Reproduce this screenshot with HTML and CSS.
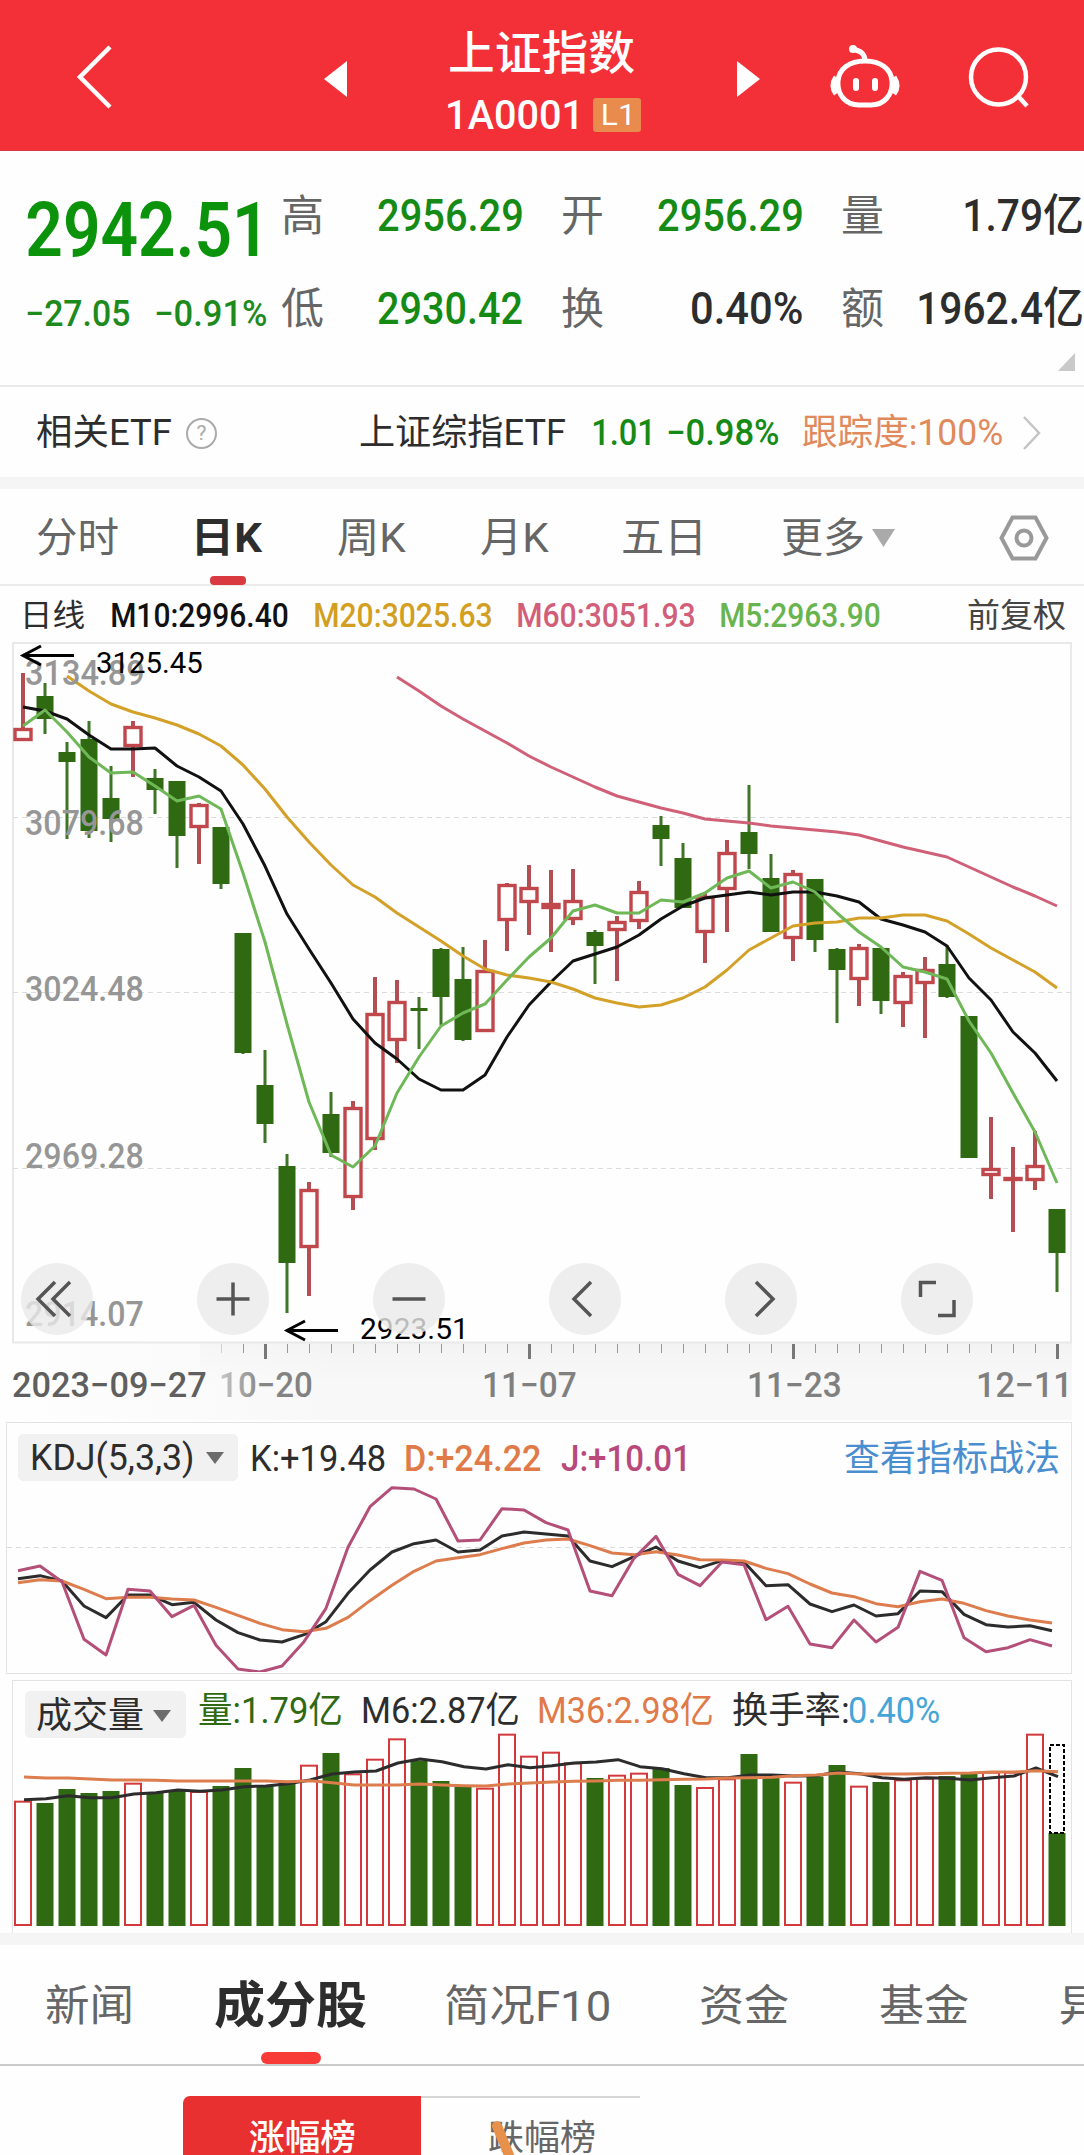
FILE: index.html
```html
<!DOCTYPE html>
<html lang="zh-CN">
<head>
<meta charset="utf-8">
<title>上证指数 1A0001</title>
<link rel="stylesheet" href="styles.css">
</head>
<body>
<header class="topbar">
  <svg class="back" width="40" height="66" viewBox="0 0 40 66"><path d="M35 3 5 33 35 63"/></svg>
  <svg class="prev" width="23" height="36" viewBox="0 0 23 36"><path d="M0 18 23 0V36Z"/></svg>
  <div class="title">
    <h1 class="fit"><span>上证指数</span></h1>
    <div class="code"><b class="fit"><span>1A0001</span></b><i class="level"><span class="fit"><span>L1</span></span></i></div>
  </div>
  <svg class="next" width="23" height="36" viewBox="0 0 23 36"><path d="M23 18 0 0V36Z"/></svg>
  <svg class="robot" width="72" height="66" viewBox="0 0 72 66"><path d="M36 17C36 9 31 7 24 5M36 17C52 17 62 25 63 37C64 51 55 61 42 61H30C17 61 8 51 9 37C10 25 20 17 36 17ZM7 33Q1 42 7 50M65 33Q71 42 65 50"/><circle class="dot" cx="24" cy="5" r="4"/><path class="eyes" d="M27 37V44M46 37V44"/></svg>
  <svg class="search" width="64" height="64" viewBox="0 0 64 64"><circle cx="31.5" cy="31" r="27.5"/><path d="M51 50 60 60"/></svg>
</header>

<section class="quote">
  <div class="last">
    <strong class="fit"><span>2942.51</span></strong>
    <div class="change"><span class="fit"><span>−27.05</span></span><span class="fit"><span>−0.91%</span></span></div>
  </div>
  <dl class="stats">
    <dt>高</dt><dd class="down w144"><span class="fit"><span>2956.29</span></span></dd>
    <dt>开</dt><dd class="down w144"><span class="fit"><span>2956.29</span></span></dd>
    <dt>量</dt><dd class="w117"><span class="fit"><span>1.79亿</span></span></dd>
    <dt>低</dt><dd class="down w144"><span class="fit"><span>2930.42</span></span></dd>
    <dt>换</dt><dd class="w110"><span class="fit"><span>0.40%</span></span></dd>
    <dt>额</dt><dd class="w163"><span class="fit"><span>1962.4亿</span></span></dd>
  </dl>
  <svg class="corner" width="17" height="18" viewBox="0 0 17 18"><path d="M17 0V18H0Z"/></svg>
</section>

<section class="etf">
  <span class="fit e1"><span>相关ETF</span></span>
  <i class="help">?</i>
  <span class="fit e2"><span>上证综指ETF</span></span>
  <span class="fit e3"><span>1.01</span></span>
  <span class="fit e4"><span>−0.98%</span></span>
  <span class="fit e5"><span>跟踪度:100%</span></span>
  <svg width="20" height="36" viewBox="0 0 20 36"><path d="M2 2 17 18 2 34"/></svg>
</section>
<div class="band"></div>

<nav class="periods">
  <span class="fit p1"><span>分时</span></span>
  <span class="fit p2"><span>日K</span></span>
  <span class="fit p3"><span>周K</span></span>
  <span class="fit p4"><span>月K</span></span>
  <span class="fit p5"><span>五日</span></span>
  <span class="fit p6"><span>更多</span></span>
  <svg class="drop" width="23" height="18" viewBox="0 0 23 18"><path d="M0 0H23L11.500 18Z"/></svg>
  <svg class="gear" width="52" height="50" viewBox="0 0 52 50"><path d="M14.500 4.500H37.500L48.500 25 37.500 45.500H14.500L3.500 25Z"/><circle cx="26" cy="25" r="7.500"/></svg>
</nav>

<div class="averages">
  <span class="fit a1"><span>日线</span></span>
  <span class="fit a2"><span>M10:2996.40</span></span>
  <span class="fit a3"><span>M20:3025.63</span></span>
  <span class="fit a4"><span>M60:3051.93</span></span>
  <span class="fit a5"><span>M5:2963.90</span></span>
  <span class="fit a6"><span>前复权</span></span>
</div>

<section class="kline">
  <svg id="kline" width="1084" height="780" viewBox="0 640 1084 780"></svg>
  <div class="tools">
    <button><svg viewBox="0 0 72 72"><path d="M34 19 17 36 34 53M49 19 32 36 49 53"/></svg></button>
    <button><svg viewBox="0 0 72 72"><path d="M36 19.500V52.500M19.500 36H52.500"/></svg></button>
    <button><svg viewBox="0 0 72 72"><path d="M19.500 36H52.500"/></svg></button>
    <button><svg viewBox="0 0 72 72"><path d="M42 19 25 36 42 53"/></svg></button>
    <button><svg viewBox="0 0 72 72"><path d="M31 19 48 36 31 53"/></svg></button>
    <button><svg viewBox="0 0 72 72"><path d="M35 19.500H19.500V34M37 52.500H53V37"/></svg></button>
  </div>
</section>

<section class="kdj">
  <div class="legend">
    <span class="pill"><span class="fit"><span>KDJ(5,3,3)</span></span><svg width="18" height="12" viewBox="0 0 18 12"><path d="M0 0H18L9 12Z"/></svg></span>
    <span class="fit k1"><span>K:+19.48</span></span>
    <span class="fit k2"><span>D:+24.22</span></span>
    <span class="fit k3"><span>J:+10.01</span></span>
    <a class="fit k4"><span>查看指标战法</span></a>
  </div>
  <svg id="kdj" width="1064" height="188" viewBox="7 1484 1064 188"></svg>
</section>

<section class="volume">
  <div class="legend">
    <span class="pill"><span class="fit"><span>成交量</span></span><svg width="18" height="12" viewBox="0 0 18 12"><path d="M0 0H18L9 12Z"/></svg></span>
    <span class="fit v1"><span>量:1.79亿</span></span>
    <span class="fit v2"><span>M6:2.87亿</span></span>
    <span class="fit v3"><span>M36:2.98亿</span></span>
    <span class="fit v4"><span>换手率:</span></span>
    <span class="fit v5"><span>0.40%</span></span>
  </div>
  <svg id="volume" width="1058" height="202" viewBox="13 1731 1058 202"></svg>
</section>
<div class="band"></div>

<nav class="sections">
  <span class="fit s1"><span>新闻</span></span>
  <span class="fit s2"><span>成分股</span></span>
  <span class="fit s3"><span>简况F10</span></span>
  <span class="fit s4"><span>资金</span></span>
  <span class="fit s5"><span>基金</span></span>
  <span class="fit s6"><span>异</span></span>
</nav>

<section class="ranks">
  <div class="rank on"><span class="fit"><span>涨幅榜</span></span></div>
  <div class="rank"><span class="fit"><span>跌幅榜</span></span><svg width="36" height="36" viewBox="0 0 36 36"><path d="M9 6 23 40"/></svg></div>
</section>
<script src="app.js"></script>
</body>
</html>
```
FILE: styles.css
```css
* { box-sizing: border-box; }
body {
  margin: 0; width: 1084px; height: 2155px; overflow: hidden; background: #fefefe;
  font-family: Roboto, "Noto Sans CJK SC", sans-serif; color: #2d2d2d;
}
svg { display: block; flex: none; fill: none; }
i { font-style: normal; }
.fit { display: block; flex: none; white-space: nowrap; font-weight: inherit; }
.fit > span { display: inline-block; transform-origin: 0 50%; }

/* top bar */
.topbar { display: flex; height: 151px; background: #f33038; color: #fff; border-bottom: 1px solid #d83a42; }
.topbar svg { stroke: #fff; stroke-width: 4.5; }
.topbar .back { margin: 44px 0 0 75px; }
.topbar .prev { margin: 61px 0 0 209px; fill: #fff; stroke: none; }
.topbar .next { margin: 61px 0 0 96px; fill: #fff; stroke: none; }
.topbar .robot { margin: 44px 0 0 69px; stroke-width: 5; }
.topbar .dot { fill: #fff; stroke: none; }
.topbar .eyes { stroke-width: 6; stroke-linecap: round; }
.topbar .search { margin: 46px 0 0 66px; }
.title { width: 193px; margin-left: 101px; padding-top: 23px; }
.title h1 { width: 184px; margin: 0 0 0 2px; font-size: 46px; line-height: 60px; font-weight: 500; }
.code { display: flex; align-items: center; gap: 16px; height: 34px; margin-top: 15px; }
.code b { width: 129px; font-size: 41px; line-height: 34px; font-weight: 500; }
.level { width: 48px; height: 34px; border-radius: 3px; background: #e88b4c; padding-left: 10px; font-size: 29px; line-height: 34px; }
.level .fit { width: 27px; }

/* quote */
.quote { position: relative; display: flex; height: 236px; border-bottom: 2px solid #eaeaea; color: #2d2d2d; }
.last { width: 281px; padding: 45px 0 0 27px; color: #0b930b; }
.last strong { width: 231px; font-size: 76px; line-height: 68px; font-weight: 600; }
.change { display: flex; gap: 27px; margin-top: 32px; font-size: 36px; line-height: 36px; font-weight: 500; color: #1c8a1c; }
.change .fit { width: 102px; }
.change .fit + .fit { width: 110px; }
.stats { display: grid; grid-template-columns: 42px 199px 39px 42px 199px 39px 42px 199px; grid-template-rows: 93px 93px; margin: 19px 0 0; width: 801px; }
.stats dt { font-size: 43px; line-height: 93px; color: #666; grid-column: 1; }
.stats dt:nth-of-type(3n+2) { grid-column: 4; }
.stats dt:nth-of-type(3n) { grid-column: 7; }
.stats dd { margin: 0; font-size: 44px; line-height: 93px; font-weight: 500; display: flex; justify-content: flex-end; }
.stats .down { color: #158a15; }
.w144 .fit { width: 144px; }
.w117 .fit { width: 117px; }
.w110 .fit { width: 110px; }
.w163 .fit { width: 163px; }
.corner { position: absolute; right: 9px; bottom: 14px; fill: #c9c9c9; }

/* related ETF */
.etf { display: flex; align-items: center; height: 90px; padding: 2px 0 0 37px; font-size: 36px; line-height: 46px; }
.etf svg { stroke: #c4c4c4; stroke-width: 2.5; margin-left: 20px; }
.e1 { width: 134px; }
.help { width: 31px; height: 31px; margin-left: 15px; border: 2px solid #aaa; border-radius: 50%; color: #aaa; font-size: 21px; line-height: 27px; text-align: center; flex: none; }
.e2 { width: 205px; margin-left: 143px; }
.e3 { width: 57px; margin-left: 28px; color: #158a15; font-weight: 500; }
.e4 { width: 110px; margin-left: 18px; color: #158a15; font-weight: 500; }
.e5 { width: 199px; margin-left: 25px; color: #e08a5c; }
.band { height: 12px; background: #f5f5f5; }

/* period tabs */
.periods { display: flex; align-items: center; height: 97px; padding: 2px 0 0 37px; border-bottom: 2px solid #ebebeb; font-size: 41px; line-height: 60px; color: #666; }
.p1 { width: 81px; }
.p2 { position: relative; width: 66px; margin-left: 79px; font-weight: 700; color: #2d2d2d; }
.p2::after { content: ""; position: absolute; left: 13px; top: 68px; width: 36px; height: 9px; border-radius: 4px; background: #d93a40; }
.p3 { width: 68px; margin-left: 75px; }
.p4 { width: 68px; margin-left: 75px; }
.p5 { width: 78px; margin-left: 74px; }
.p6 { width: 81px; margin-left: 81px; }
.drop { margin-left: 9px; fill: #aaa; }
.gear { margin-left: 103px; stroke: #999; stroke-width: 4; }

/* moving averages */
.averages { display: flex; height: 54px; padding: 9px 0 0 25px; font-size: 33px; line-height: 42px; font-weight: 500; }
.a1 { width: 59px; font-size: 31px; font-weight: 400; }
.a2 { width: 176px; margin-left: 28px; color: #111; }
.a3 { width: 176px; margin-left: 27px; color: #d29f22; }
.a4 { width: 176px; margin-left: 27px; color: #d25f79; }
.a5 { width: 159px; margin-left: 27px; color: #68b44f; }
.a6 { width: 97px; margin-left: 88px; font-size: 33px; font-weight: 400; color: #444; }

/* candlestick chart */
.kline { position: relative; height: 780px; }
.kline text { font-family: Roboto, sans-serif; }
.scale { font-size: 35px; font-weight: 500; fill: #969696; }
.mark { font-size: 30px; fill: #000; font-weight: 400; }
.date { font-size: 35px; font-weight: 500; fill: #808080; }
.date.first { fill: #5f5f5f; }
.frame { stroke: #e9e9e9; stroke-width: 2; }
.grid { stroke: #dcdcdc; stroke-width: 1; stroke-dasharray: 5 4; }
.tick { stroke: #999; stroke-width: 1; }
.tick.major { stroke: #777; stroke-width: 3; }
.arrow { stroke: #000; stroke-width: 3; }
.up { stroke: #c0474c; stroke-width: 3.4; fill: #fefefe; }
.upwick { stroke: #b34e52; stroke-width: 4; }
.fall { fill: #2f6912; }
.fallwick { stroke: #3f7526; stroke-width: 3; }
.line { stroke-width: 3; stroke-linejoin: round; }
.black { stroke: #111; }
.ink { stroke: #2c2c2c; }
.gold { stroke: #d3a028; }
.pink { stroke: #cf6078; }
.green { stroke: #6fb858; }
.orange { stroke: #dd7c4d; }
.purple { stroke: #b34f78; }
.volup { stroke: #d2383c; stroke-width: 2; fill: #fefefe; }
.pending { stroke: #000; stroke-width: 2; stroke-dasharray: 4 2; fill: #fefefe; }
.tools { position: absolute; left: 21px; top: 623px; display: flex; gap: 104px; }
.tools button { width: 72px; height: 72px; padding: 0; border: 0; border-radius: 50%; background: rgba(234, 234, 234, .8); }
.tools svg { stroke: #555; stroke-width: 3.5; }

/* indicator panels */
.legend { display: flex; font-size: 36px; line-height: 50px; }
.pill { display: flex; align-items: center; flex: none; height: 47px; border-radius: 5px; background: #f1f1f1; }
.pill svg { fill: #6c6c6c; }
.kdj { width: 1066px; height: 252px; margin: 2px 0 0 6px; border: 1px solid #e3e3e3; }
.kdj .legend { height: 61px; padding: 11px 0 0 11px; }
.kdj .pill { width: 220px; padding-left: 14px; }
.kdj .pill .fit { width: 160px; }
.kdj .pill svg { margin-left: 14px; }
.k1 { width: 133px; margin-left: 14px; }
.k2 { width: 135px; margin-left: 21px; color: #e07a48; font-weight: 500; }
.k3 { width: 124px; margin-left: 20px; color: #b9497a; font-weight: 500; }
.k4 { width: 213px; margin-left: 160px; color: #4a8ed0; }
.volume { width: 1060px; height: 253px; margin: 6px 0 0 12px; border: 1px solid #e3e3e3; border-bottom: 0; }
.volume .legend { height: 60px; padding: 10px 0 0 12px; line-height: 40px; }
.volume .pill { width: 161px; padding: 3px 0 0 12px; }
.volume .pill .fit { width: 106px; }
.volume .pill svg { margin-left: 10px; }
.volume svg#volume { margin-top: -10px; position: relative; }
.v1 { width: 142px; margin-left: 13px; color: #2f6912; }
.v2 { width: 155px; margin-left: 22px; }
.v3 { width: 173px; margin-left: 21px; color: #e07a48; }
.v4 { width: 115px; margin-left: 21px; }
.v5 { width: 89px; margin-left: 2px; color: #45a5d6; }

/* content tabs */
.sections { display: flex; align-items: center; height: 121px; padding: 2px 0 0 46px; border-bottom: 2px solid #cacaca; font-size: 43px; line-height: 60px; color: #666; overflow: hidden; }
.s1 { width: 85px; }
.s2 { position: relative; width: 151px; margin-left: 84px; font-size: 50px; font-weight: 700; color: #2d2d2d; }
.s2::after { content: ""; position: absolute; left: 46px; top: 76px; width: 60px; height: 12px; border-radius: 6px; background: #f93b38; }
.s3 { width: 163px; margin-left: 80px; }
.s4 { width: 87px; margin-left: 92px; }
.s5 { width: 88px; margin-left: 92px; }
.s6 { width: 42px; margin-left: 93px; }

/* ranking switch */
.ranks { display: flex; height: 90px; padding: 30px 0 0 183px; font-size: 35px; line-height: 50px; overflow: hidden; }
.rank { position: relative; width: 219px; padding: 16px 0 0 68px; border-top: 2px solid #d6d6d6; color: #666; }
.rank.on { width: 238px; padding: 18px 0 0 66px; border: 0; border-radius: 7px 0 0 0; background: #e83030; color: #fff; font-weight: 500; }
.rank .fit { width: 106px; }
.rank svg { position: absolute; left: 67px; top: 22px; stroke: #e8914d; stroke-width: 10; stroke-linecap: round; }
```
FILE: app.js
```js
const NS = 'http://www.w3.org/2000/svg';
const ctx = document.createElement('canvas').getContext('2d');

// Horizontal ink extent of a text in its computed font.
function ink(el, text) {
  const s = getComputedStyle(el);
  ctx.font = `${s.fontWeight} ${s.fontSize} ${s.fontFamily}`;
  const m = ctx.measureText(text);
  return { left: -m.actualBoundingBoxLeft, width: m.actualBoundingBoxLeft + m.actualBoundingBoxRight };
}

function add(root, tag, attrs, text) {
  const el = document.createElementNS(NS, tag);
  for (const k in attrs) el.setAttribute(k, attrs[k]);
  if (text) el.textContent = text;
  root.appendChild(el);
  return el;
}

function label(root, cls, text, x, y, width, extra) {
  const el = add(root, 'text', Object.assign({ class: cls }, extra), text);
  const b = ink(el, text);
  el.setAttribute('transform', `translate(${x} ${y}) scale(${width / b.width} 1) translate(${-b.left} 0)`);
}

function line(root, cls, x0, start, ys) {
  add(root, 'polyline', { class: 'line ' + cls, points: ys.map((y, i) => `${x0 + 22 * (i + start)},${y}`).join(' ') });
}

// Squeeze each figure to the width of its box.
document.querySelectorAll('.fit').forEach(box => {
  const inner = box.firstElementChild;
  const b = ink(inner, inner.textContent);
  const k = box.clientWidth / b.width;
  inner.style.transform = `translateX(${-b.left * k}px) scaleX(${k})`;
});

// --- candlesticks: direction, high, body top, body bottom, low
const candles = `R673,728,741,741 G683,696,719,734 G742,752,762,839 G721,739,831,838 G766,798,819,842 R721,726,747,777
G769,778,790,814 G781,781,836,868 R803,804,828,864 G827,827,884,889 G933,933,1053,1054 G1050,1085,1124,1143
G1154,1166,1263,1313 R1182,1189,1248,1296 G1092,1114,1153,1157 R1101,1107,1198,1210 R977,1013,1140,1150 R980,1001,1041,1063
G997,1008,1011,1049 G948,949,997,1025 G947,979,1040,1041 R940,970,1032,1032 R883,884,921,951 R865,887,903,935
R870,903,909,952 R869,900,920,925 G930,932,946,984 R916,921,931,981 R881,891,922,929 G816,825,839,866
G843,858,908,908 R893,896,933,963 R840,852,890,932 G785,832,854,869 G854,878,932,932 R870,873,939,961
G879,879,940,952 G948,949,970,1023 R944,947,980,1006 G948,948,1001,1014 R972,975,1004,1027 R957,969,984,1038
G945,964,997,998 G1016,1016,1158,1158 R1117,1168,1176,1199 R1147,1177,1181,1232 R1131,1165,1181,1190 G1209,1209,1253,1292`.split(/\s+/);

const k = document.getElementById('kline');
const defs = add(k, 'defs', {});
const fade = add(defs, 'linearGradient', { id: 'fade', x1: 0, x2: 1, y1: 0, y2: 0 });
add(fade, 'stop', { offset: 0, 'stop-color': '#fefefe' });
add(fade, 'stop', { offset: 0.3, 'stop-color': '#f8f8f8' });
add(fade, 'stop', { offset: 1, 'stop-color': '#f8f8f8' });
const dim = add(defs, 'linearGradient', { id: 'dim', x1: 0, x2: 1, y1: 0, y2: 0 });
add(dim, 'stop', { offset: 0, 'stop-color': '#c8c8c8' });
add(dim, 'stop', { offset: 0.45, 'stop-color': '#868686' });
add(dim, 'stop', { offset: 1, 'stop-color': '#808080' });
const soft = add(defs, 'linearGradient', { id: 'soft', x1: 0, x2: 0, y1: 0, y2: 1 });
add(soft, 'stop', { offset: 0, 'stop-color': '#000', 'stop-opacity': 0.02 });
add(soft, 'stop', { offset: 1, 'stop-color': '#000', 'stop-opacity': 0 });

add(k, 'rect', { x: 13, y: 1343, width: 1059, height: 80, fill: 'url(#fade)' });
add(k, 'rect', { x: 200, y: 1343, width: 872, height: 40, fill: 'url(#soft)' });
add(k, 'rect', { class: 'frame', x: 13, y: 643, width: 1058, height: 699.5 });
[817.5, 992.5, 1168.5].forEach(y => add(k, 'path', { class: 'grid', d: `M13 ${y}H1071` }));

candles.forEach((c, i) => {
  const x = 23 + 22 * i, red = c[0] === 'R';
  const [hi, top, bot, lo] = c.slice(1).split(',').map(Number);
  if (red) {
    add(k, 'path', { class: 'upwick', d: `M${x} ${hi}V${top}M${x} ${bot}V${lo}` });
    add(k, 'rect', { class: 'up', x: x - 8, y: top + 1.5, width: 16, height: Math.max(bot - top - 3, 1) });
  } else {
    add(k, 'path', { class: 'fallwick', d: `M${x} ${hi}V${lo}` });
    add(k, 'rect', { class: 'fall', x: x - 8.5, y: top, width: 17, height: bot - top });
  }
});

line(k, 'black', 23, 0, [707,711,719,735,749,749,748,766,777,791,824,866,914,949,983,1019,1043,1059,1079,1090,1090,1075,1037,1005,982,961,954,947,935,919,906,898,895,892,895,892,892,896,902,919,925,932,946,978,1000,1032,1053,1081]);
line(k, 'gold', 23, 2, [676,691,704,712,718,725,734,746,765,789,817,842,865,885,897,913,927,941,956,969,975,978,982,989,998,1003,1007,1005,998,987,970,950,938,926,923,922,918,918,915,915,921,934,948,960,972,988]);
line(k, 'pink', 23, 17, [677,691,706,719,731,743,756,767,777,787,796,802,808,813,819,821,823,826,828,830,832,835,841,847,852,857,867,877,887,896,906]);
line(k, 'green', 23, 0, [726,710,732,757,773,772,786,801,796,809,873,942,1024,1102,1155,1167,1146,1093,1057,1026,1013,1004,980,957,938,911,905,913,913,900,902,893,878,871,888,882,892,913,932,947,967,972,979,1021,1053,1093,1132,1183]);

[['3134.89', 685], ['3079.68', 834.5], ['3024.48', 1001], ['2969.28', 1168], ['2914.07', 1326]]
  .forEach(([t, y]) => label(k, 'scale', t, 26, y, 117));
label(k, 'mark', '3125.45', 97, 673, 105);
label(k, 'mark', '2923.51', 361, 1339, 102);
add(k, 'path', { class: 'arrow', d: 'M74 655.500H23M41 646 23 655.500 41 665' });
add(k, 'path', { class: 'arrow', d: 'M338 1330.500H287M305 1321 287 1330.500 305 1340' });

for (let i = 9; i < 48; i++) {
  const major = (i - 11) % 12 === 0;
  add(k, 'path', { class: 'tick' + (major ? ' major' : ''), d: `M${23.5 + 22 * i} 1344V${major ? 1359 : 1353}`, opacity: i === 9 ? 0.4 : 1 });
}
label(k, 'date first', '2023−09−27', 13, 1397, 193);
label(k, 'date', '10−20', 221, 1397, 91, { style: 'fill:url(#dim)' });
label(k, 'date', '11−07', 484, 1397, 92);
label(k, 'date', '11−23', 749, 1397, 91);
label(k, 'date', '12−11', 978, 1397, 89);

// --- KDJ oscillator
const d = document.getElementById('kdj');
const at = o => y => o + y / 3;
add(d, 'path', { class: 'grid', d: 'M7 1547.500H1071' });
line(d, 'ink', 18, 0, [506,497,513,588,623,555,555,584,577,630,668,690,696,674,635,550,480,426,401,390,426,420,378,366,372,378,453,470,440,411,453,473,452,456,527,524,582,605,585,618,611,543,545,613,644,651,647,662].map(at(1410)));
line(d, 'orange', 18, 0, [518,509,513,538,566,562,562,567,570,592,616,640,659,665,655,622,572,526,484,453,443,434,416,399,390,387,407,429,434,425,435,449,450,453,475,491,522,549,560,581,590,575,567,580,602,618,630,639].map(at(1410)));
line(d, 'purple', 18, 0, [482,468,515,688,735,538,543,620,586,706,777,786,768,695,595,412,290,233,237,267,393,390,296,300,338,360,543,557,445,379,493,527,456,464,629,589,702,713,630,696,652,484,511,683,725,713,689,708].map(at(1410)));

// --- volume bars
const v = document.getElementById('volume');
const bars = 'R377 G384 G342 G354 G348 R323 G352 G345 R348 G333 G279 G333 G325 R269 G234 R295 R251 R190 G257 G318 G336 R338 R176 R242 R230 R262 G309 R299 R293 G279 G330 R336 R310 G237 G300 R320 G305 G270 R332 G321 R313 R308 G303 G297 R290 R290 R176 G474'.split(' ');
bars.forEach((b, i) => {
  const x = 23 + 22 * i, y = 1675 + b.slice(1) / 3;
  if (b[0] === 'R') add(v, 'rect', { class: 'volup', x: x - 8, y: y + 1, width: 16, height: 1924 - y });
  else add(v, 'rect', { class: 'fall', x: x - 8.5, y, width: 17, height: 1926 - y });
});
add(v, 'rect', { class: 'pending', x: 1050, y: 1745, width: 14, height: 88 });
line(v, 'ink', 24, 0, [374,371,362,368,368,357,353,345,349,345,335,333,326,315,297,291,288,264,252,260,275,282,269,278,272,264,261,254,275,281,296,308,308,300,300,303,302,291,296,308,313,308,310,315,308,303,279,305].map(at(1675)));
line(v, 'orange', 24, 0, [306,309,309,312,315,315,316,318,318,318,318,318,320,317,323,330,330,330,327,330,332,333,327,324,321,319,318,316,316,314,313,312,309,308,307,302,300,294,297,297,297,296,295,294,291,291,287,290].map(at(1675)));
```
